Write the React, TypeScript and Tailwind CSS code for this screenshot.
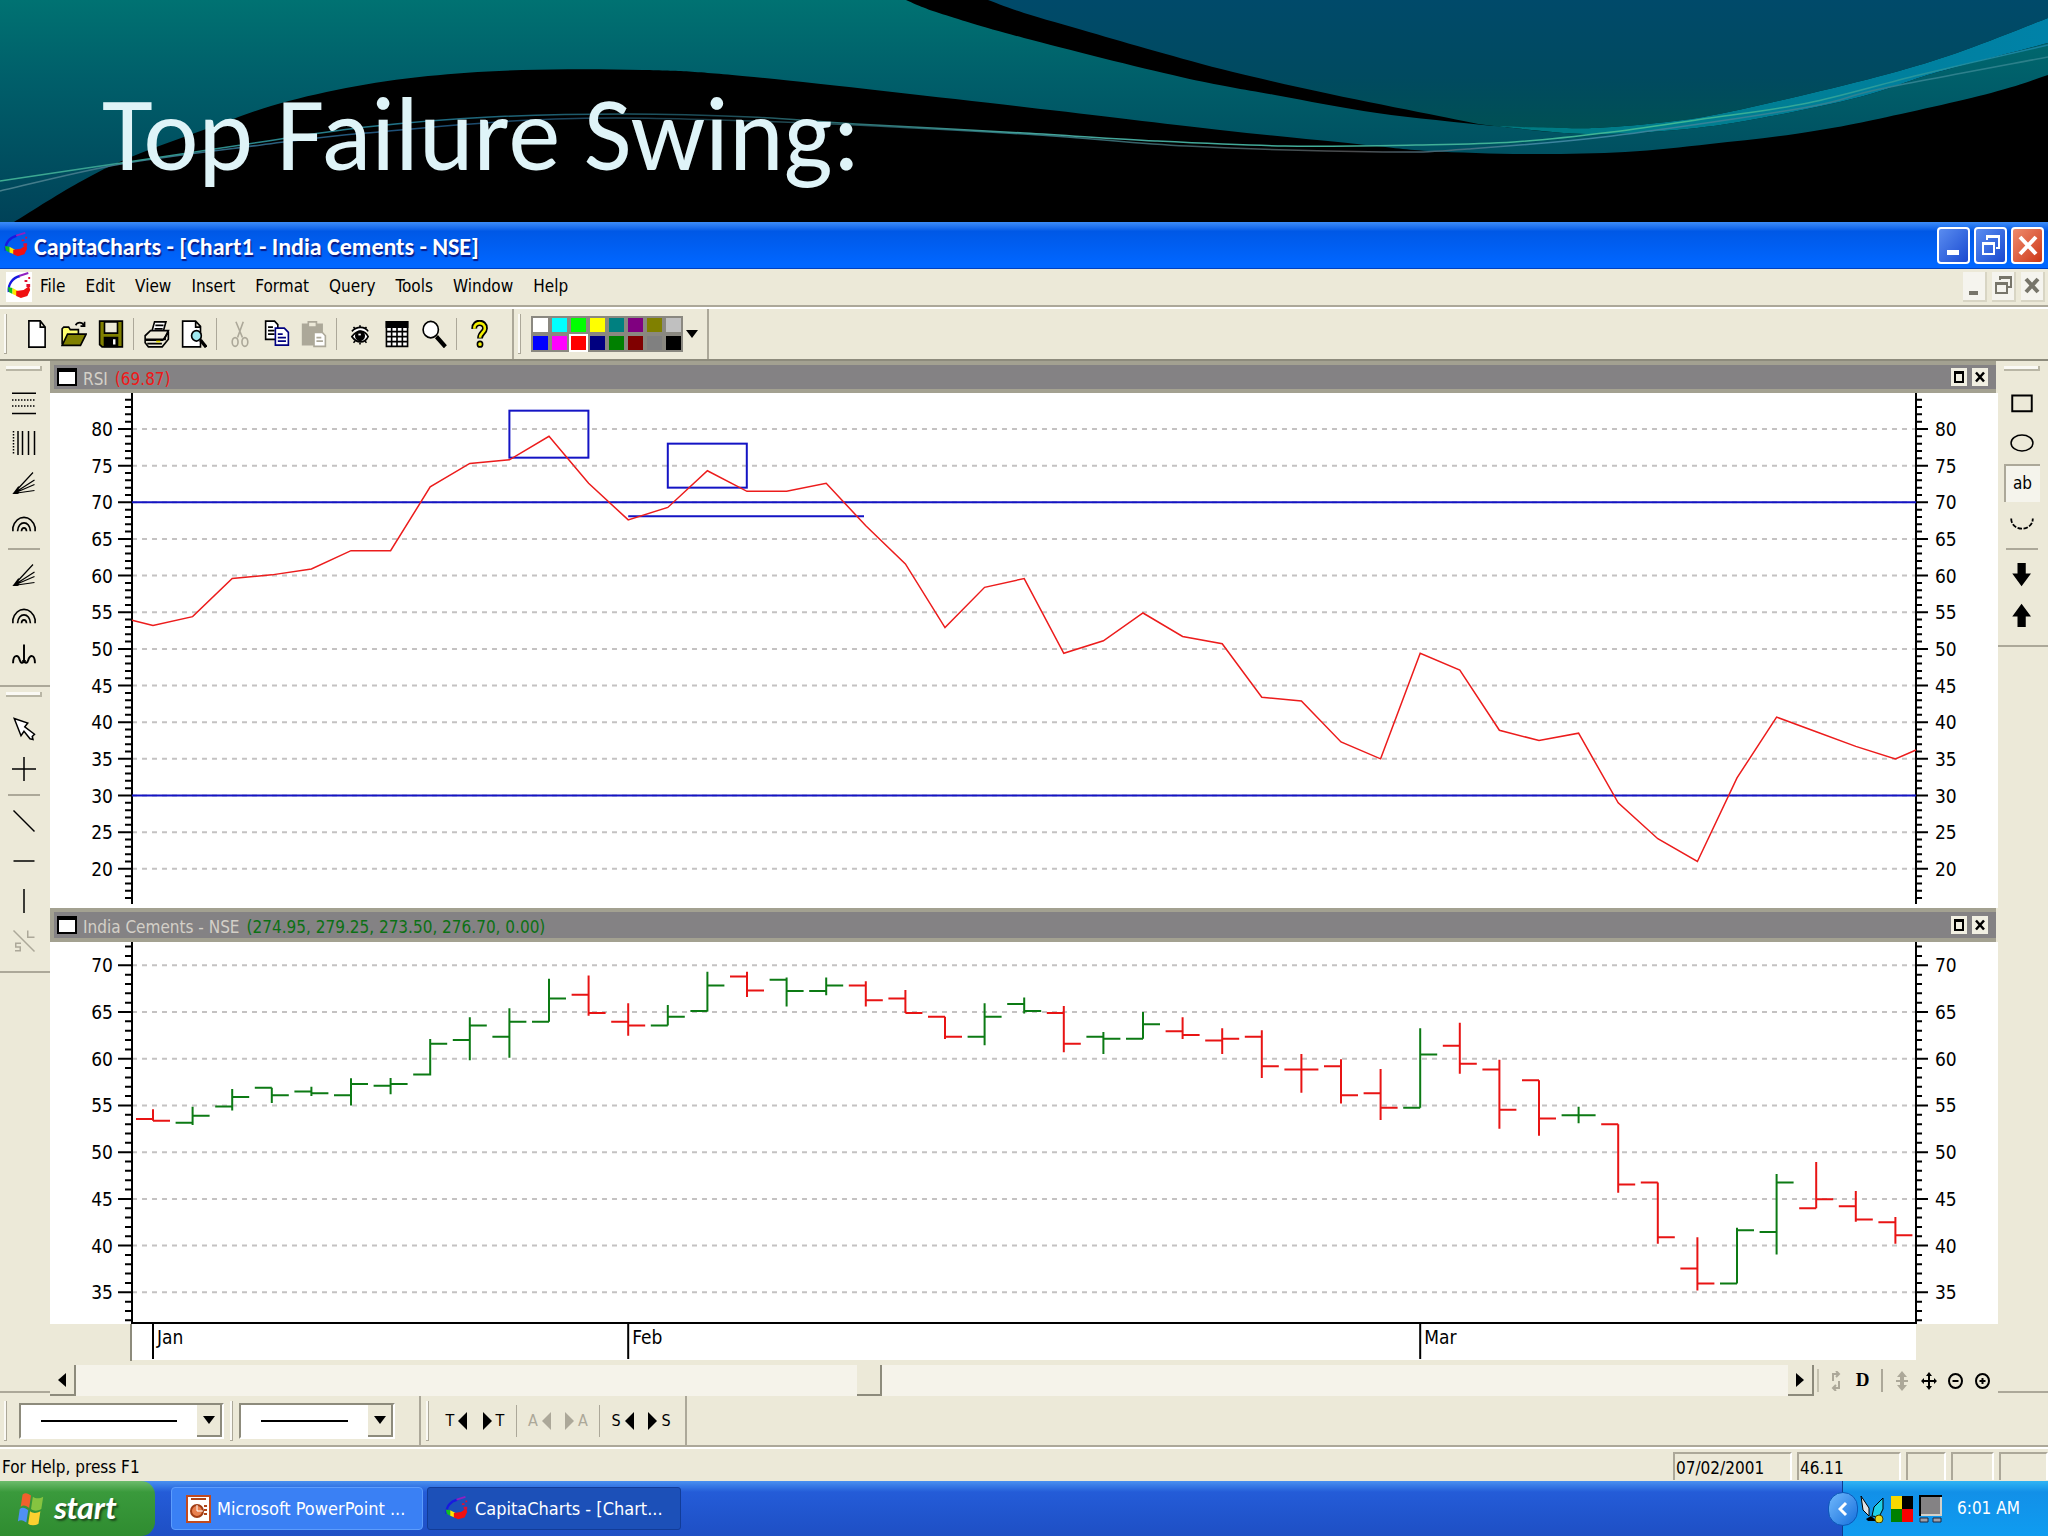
import type { ReactNode } from "react";

type Point = [number, number];

// smooth curve through a list of points
function curve(points: Point[], first = "M") {
  let d = `${first}${points[0][0]} ${points[0][1]}`;
  for (let i = 0; i < points.length - 1; i++) {
    const p0 = points[Math.max(i - 1, 0)];
    const p1 = points[i];
    const p2 = points[i + 1];
    const p3 = points[Math.min(i + 2, points.length - 1)];
    d += `C${p1[0] + (p2[0] - p0[0]) / 6} ${p1[1] + (p2[1] - p0[1]) / 6} ${p2[0] - (p3[0] - p1[0]) / 6} ${p2[1] - (p3[1] - p1[1]) / 6} ${p2[0]} ${p2[1]}`;
  }
  return d;
}

const tealTop: Point[] = [[906, 0], [939, 13], [1024, 38], [1181, 77], [1275, 95], [1377, 113], [1494, 126], [1586, 134], [1677, 130], [1756, 119], [1860, 97], [1938, 72], [2048, 43]];
const tealBottom: Point[] = [[2048, 75], [1991, 93], [1873, 120], [1795, 134], [1710, 144], [1625, 152], [1527, 154], [1429, 151], [1357, 144], [1220, 130], [1024, 107], [754, 77], [643, 70], [522, 70], [428, 76], [346, 88], [271, 106], [209, 128], [131, 157], [78, 183], [14, 222]];
const blueBottom: Point[] = [[988, 0], [1024, 13], [1089, 32], [1155, 51], [1233, 72], [1330, 94], [1429, 114], [1494, 126], [1560, 128], [1612, 127], [1703, 117], [1808, 94], [1899, 71], [1965, 50], [2048, 18]];
const cyanTop: Point[] = [[1494, 126], [1560, 128], [1612, 127], [1703, 117], [1808, 94], [1899, 71], [1965, 50], [2048, 18]];
const cyanBottom: Point[] = [[2048, 43], [1938, 72], [1860, 97], [1756, 119], [1677, 130], [1586, 134], [1494, 126]];
const greenLine: Point[] = [[0, 181], [121, 163], [261, 142], [366, 127], [490, 117], [627, 114], [751, 117], [856, 124], [1024, 133], [1155, 141], [1285, 146], [1416, 145], [1514, 142], [1612, 132], [1710, 118], [1808, 103], [1919, 75], [2048, 45]];
const greyLine: Point[] = [[0, 191], [121, 164], [261, 145], [366, 133], [555, 119], [751, 121], [1024, 134], [1187, 146], [1383, 152], [1468, 149], [1612, 136], [1808, 107], [1880, 89], [2048, 57]];

function Banner() {
  return (
    <header className="grid bg-black">
      <svg className="col-start-1 row-start-1 h-[222px] w-full" viewBox="0 0 2048 222" preserveAspectRatio="none">
        <defs>
          <linearGradient id="teal" x1="0" y1="0" x2="0" y2="1">
            <stop offset="0" stopColor="#007272" />
            <stop offset="0.35" stopColor="#005f6a" />
            <stop offset="1" stopColor="#004258" />
          </linearGradient>
          <linearGradient id="blue" x1="0" y1="0" x2="0" y2="1">
            <stop offset="0" stopColor="#004a6a" />
            <stop offset="0.6" stopColor="#004a60" />
            <stop offset="1" stopColor="#005054" />
          </linearGradient>
          <linearGradient id="cyan" x1="0" y1="0" x2="1" y2="0">
            <stop offset="0" stopColor="#007a80" />
            <stop offset="1" stopColor="#0082a8" />
          </linearGradient>
          <linearGradient id="line" x1="0" y1="0" x2="1" y2="0">
            <stop offset="0" stopColor="#3fae92" />
            <stop offset="0.2" stopColor="#1f6f86" />
            <stop offset="0.35" stopColor="#1c4a55" />
            <stop offset="0.5" stopColor="#44a39c" />
            <stop offset="0.82" stopColor="#3fb894" />
            <stop offset="1" stopColor="#1880a0" />
          </linearGradient>
          <linearGradient id="line2" x1="0" y1="0" x2="1" y2="0">
            <stop offset="0" stopColor="#47808c" />
            <stop offset="0.2" stopColor="#1d4f78" />
            <stop offset="0.35" stopColor="#1c3d46" />
            <stop offset="0.5" stopColor="#2d6f78" />
            <stop offset="0.66" stopColor="#4a4a4c" />
            <stop offset="0.75" stopColor="#3d84a0" />
            <stop offset="1" stopColor="#2a7f88" />
          </linearGradient>
        </defs>
        <path fill="url(#teal)" d={`M0 222V0H906${curve(tealTop, "L")}${curve(tealBottom, "L")}Z`} />
        <path fill="url(#blue)" d={`${curve(blueBottom)}V0Z`} />
        <path fill="url(#cyan)" d={`${curve(cyanTop)}${curve(cyanBottom, "L")}Z`} />
        <path fill="none" stroke="url(#line2)" strokeWidth="1.5" d={curve(greyLine)} />
        <path fill="none" stroke="url(#line)" strokeWidth="1.5" d={curve(greenLine)} />
      </svg>
      <h1 className="col-start-1 row-start-1 self-center pt-[48px] pl-[102px] text-[104px] leading-[110px] text-[#dff4f8] font-[Carlito,Lato,sans-serif]">
        Top Failure Swing:
      </h1>
    </header>
  );
}

function AppLogo({ className }: { className: string }) {
  return (
    <svg className={className} viewBox="0 0 28 28" preserveAspectRatio="none">
      <path d="M3 20C2 12 7 6 15 4" fill="none" stroke="#1818e0" strokeWidth="2.5" />
      <path d="M14 4L24 1" stroke="#9020c0" strokeWidth="2" />
      <path d="M2 15l5 1v6l-4-2z" fill="#10c020" />
      <path d="M7 16l6 3-1 5-5-2z" fill="#ffe800" />
      <path d="M11 19l8-1 6-4 1 4-3 6-7 2-5-2z" fill="#f01010" />
      <path d="M20 8h3v2h-3zM24 5h2v2h-2zM22 12h4v3h-4z" fill="#e01030" />
    </svg>
  );
}

const captionButton = "flex h-[37px] w-[33px] items-center justify-center rounded-[4px] border-2 border-white";

function TitleBar() {
  return (
    <div className="flex h-[47px] items-center bg-linear-to-b from-[#3c8cf8] via-[#0058e6] via-20% to-[#0066ff] to-90% pr-1 pl-[3px] border-b border-[#0040c0]">
      <AppLogo className="h-[26px] w-[26px]" />
      <span className="ml-[5px] flex-1 pt-[3px] text-[24px] leading-7 font-bold text-white [text-shadow:1px_2px_1px_#0a1883] font-[Carlito,Lato,sans-serif]">
        CapitaCharts - [Chart1 - India Cements - NSE]
      </span>
      <div className="flex gap-1">
        <button aria-label="Minimize" className={`${captionButton} bg-linear-to-br from-[#5a8cf0] to-[#1c48d0]`}>
          <svg className="h-7 w-6" viewBox="0 0 24 28"><path d="M5 19h12v5H5z" fill="#fff" /></svg>
        </button>
        <button aria-label="Restore" className={`${captionButton} bg-linear-to-br from-[#5a8cf0] to-[#1c48d0]`}>
          <svg className="h-7 w-6" viewBox="0 0 24 28">
            <path d="M8 9V5h12v12h-3M4 12h11v11H4zM4 13h11M8 6h12" fill="none" stroke="#fff" strokeWidth="2" />
          </svg>
        </button>
        <button aria-label="Close" className={`${captionButton} bg-linear-to-br from-[#ee8a6c] to-[#cc3410]`}>
          <svg className="h-7 w-6" viewBox="0 0 24 28">
            <path d="M4 6l16 17M20 6L4 23" stroke="#fff" strokeWidth="4" />
          </svg>
        </button>
      </div>
    </div>
  );
}

const menus = ["File", "Edit", "View", "Insert", "Format", "Query", "Tools", "Window", "Help"];
const mdiButton = "flex h-[30px] w-6 items-center justify-center border-r-2 border-b-2 border-[#d8d5c4] bg-[#f5f4ee]";

function MenuBar() {
  return (
    <nav className="flex h-[38px] items-center border-b-2 border-[#aca899] pr-[3px] pl-[6px]">
      <div className="mr-2 h-[30px] w-[26px] bg-white">
        <AppLogo className="h-[28px] w-[26px]" />
      </div>
      <div className="flex flex-1 gap-5">
        {menus.map((name) => (
          <button key={name}>{name}</button>
        ))}
      </div>
      <div className="flex gap-[5px]">
        <button aria-label="Minimize chart" className={mdiButton}>
          <svg className="h-6 w-5" viewBox="0 0 20 24"><path d="M5 17h9v4H5z" fill="#77756a" /></svg>
        </button>
        <button aria-label="Restore chart" className={mdiButton}>
          <svg className="h-6 w-5" viewBox="0 0 20 24">
            <path d="M7 6V3h11v10h-3M3 9h11v10H3zM3 10h11M7 4h11" fill="none" stroke="#77756a" strokeWidth="2" />
          </svg>
        </button>
        <button aria-label="Close chart" className={mdiButton}>
          <svg className="h-6 w-5" viewBox="0 0 20 24">
            <path d="M4 5l12 13M16 5L4 18" stroke="#77756a" strokeWidth="4" />
          </svg>
        </button>
      </div>
    </nav>
  );
}

function Pixel({ children, className = "h-[28px] w-[26px]" }: { children: ReactNode; className?: string }) {
  return (
    <svg className={className} viewBox="0 0 16 16" preserveAspectRatio="none" fill="none" stroke="#000">
      {children}
    </svg>
  );
}

const toolIcons: Record<string, ReactNode> = {
  New: <path d="M3 .5h7l3 3.500v11.500H3zM10 .5V4h3" fill="#fff" />,
  Open: (
    <>
      <path d="M.7 14V5l1-1h3l1 1.500h5V8" fill="#ffff70" />
      <path d="M.7 14.500L4 8h11.500l-3.500 6.500z" fill="#808000" />
      <path d="M9 3c1-2 4-2 5 0M14.500 1v2.500H12" />
    </>
  ),
  Save: (
    <>
      <path d="M1 .7h14v14.600H2.500L1 14z" fill="#808000" />
      <path d="M4 1h8v6.500H4z" fill="#ece9d8" />
      <path d="M4 10h8v5H4z" fill="#000" />
      <path d="M10 11v3" stroke="#fff" strokeWidth="1.500" />
    </>
  ),
  Print: (
    <>
      <path d="M5 6l1.500-5h7L12 6" fill="#fff" />
      <path d="M7 3h5M6.500 5h5" />
      <path d="M.7 9L4 6h11l-2 4v1H.7zM.7 9v4l2 2.300h8.500L15 11V6.500" fill="#ece9d8" />
      <path d="M1 11.500h11M2 13.500h9M12 11l3-4" />
      <path d="M7.500 12.300h2.500" stroke="#e8e000" />
    </>
  ),
  Preview: (
    <>
      <path d="M1 .6h8l3 3v11.700H1zM9 .6V4h3" fill="#fff" />
      <circle cx="9.500" cy="9" r="3" fill="#9fe8f0" />
      <path d="M12 11.500l3.500 4" strokeWidth="2" />
    </>
  ),
  Cut: (
    <g stroke="#aca899">
      <path d="M5.500 1l4 9M10 1L6.500 10" />
      <ellipse cx="5" cy="12.500" rx="1.800" ry="2.500" />
      <ellipse cx="11" cy="12.500" rx="1.800" ry="2.500" />
    </g>
  ),
  Copy: (
    <>
      <path d="M1 .6h5.500l2 2V11H1zM2.500 4h3M2.500 6h4M2.500 8h4" fill="#fff" />
      <path d="M7 4.600h5.500l2.500 2.500v7.300H7zM8.500 8h3M8.500 10h5M8.500 12h5" fill="#fff" stroke="#000080" />
    </>
  ),
  Paste: (
    <>
      <path d="M1 2.500h12V14H1z" fill="#aca899" stroke="#aca899" />
      <path d="M4.500 1h5v3h-5z" fill="#ece9d8" stroke="#aca899" />
      <path d="M8 7h5l2 2v6H8zM9.500 10h3M9.500 12h4" fill="#fff" stroke="#aca899" />
    </>
  ),
  Watch: (
    <>
      <path d="M3 6.500c3-3 8-3 10 0M3 9.500c3-4 8-4 10 0-2 4-7 4-10 0z" fill="#fff" />
      <circle cx="8" cy="9" r="2.600" fill="#000" />
      <path d="M7 8.300h1.500" stroke="#fff" />
      <path d="M4 13l1-1M8 14v-1M12 13l-1-1M4 4l1 1M8 3v1M12 4l-1 1" />
    </>
  ),
  Grid: (
    <>
      <path d="M1.500 1h13v14h-13z" fill="#fff" />
      <path d="M1.500 1h13v3h-13z" fill="#000" />
      <path d="M4.700 4v11M8 4v11M11.300 4v11M1.500 6.700h13M1.500 9.500h13M1.500 12.300h13" />
    </>
  ),
  Zoom: (
    <>
      <circle cx="6" cy="5.500" r="4.700" fill="#fff" />
      <path d="M9.500 9.500l5.500 5.800" strokeWidth="2.500" />
    </>
  ),
  Help: (
    <>
      <path d="M4.500 5c-.5-4.500 7-4.500 6.500 0 0 2-3 2.500-3 5.500" strokeWidth="3.600" />
      <path d="M4.500 5c-.3-4.300 6.800-4.300 6.500 0 0 2-3 2.500-3 5.200" stroke="#f4f000" strokeWidth="1.600" />
      <circle cx="8" cy="13.800" r="1.600" fill="#f4f000" />
    </>
  ),
};

const toolGroups = [["New", "Open", "Save"], ["Print", "Preview"], ["Cut", "Copy", "Paste"], ["Watch", "Grid", "Zoom"], ["Help"]];

const palette = [
  "bg-white", "bg-[#00ffff]", "bg-[#00ff00]", "bg-[#ffff00]", "bg-[#008080]", "bg-[#800080]", "bg-[#808000]", "bg-[#c0c0c0]",
  "bg-[#0000ff]", "bg-[#ff00ff]", "bg-[#ff0000]", "bg-[#000080]", "bg-[#008000]", "bg-[#800000]", "bg-[#808080]", "bg-black",
];

function VGrip() {
  return <span className="h-10 w-[3px] border-r border-b border-[#aca899] bg-[#faf9f4]" />;
}

function VRule() {
  return <span className="mx-1 h-8 w-px bg-[#aca899]" />;
}

function Toolbar() {
  return (
    <div className="flex h-[54px] items-stretch border-t-2 border-t-white border-b-2 border-b-[#8d8b7c]">
      <div className="flex items-center border-r-2 border-[#aca899] pr-[14px] pl-1">
        <VGrip />
        <div className="ml-[11px] flex items-center">
          {toolGroups.map((group, i) => (
            <div key={group[0]} className="flex items-center">
              {i > 0 && <VRule />}
              {group.map((name) => (
                <button key={name} aria-label={name} className="flex h-10 w-[37px] items-center justify-center">
                  <Pixel>{toolIcons[name]}</Pixel>
                </button>
              ))}
            </div>
          ))}
        </div>
      </div>
      <div className="flex items-center border-r-2 border-[#aca899] pr-[9px] pl-1">
        <VGrip />
        <div className="ml-[10px] grid grid-cols-8">
          {palette.map((color, i) => (
            <button
              key={color}
              aria-label={`Color ${i + 1}`}
              className={`h-[18px] w-[19px] border-2 ${i === 10 ? "border-white" : "border-[#8a8880]"} ${color}`}
            />
          ))}
        </div>
        <button aria-label="More colors" className="ml-[3px]">
          <svg className="h-2 w-3" viewBox="0 0 12 8"><path d="M0 0h12L6 8z" /></svg>
        </button>
      </div>
    </div>
  );
}

function HGrip() {
  return (
    <div className="flex h-[22px] items-start justify-center pt-[5px]">
      <span className="h-[5px] w-9 border-r-2 border-b-2 border-[#b9b6a5] bg-[#faf9f4]" />
    </div>
  );
}

function HRule() {
  return (
    <div className="flex h-3 items-center justify-center">
      <span className="h-[2px] w-8 bg-[#aca899]" />
    </div>
  );
}

const fan = <path d="M1 15L14 1M1 15L15 6M1 15L15 9M1 15L15 13M1 15l3-4v4z" strokeWidth=".8" />;
const arcs = <path d="M.6 13.500V11C3 2 13 2 15.400 11v2.500M3.700 13.500C4 6 12 6 12.300 13.500M6.300 13.500c.3-3 3.100-3 3.400 0" strokeWidth="1.100" />;

const leftGroups: { name: string; icon: ReactNode }[][][] = [
  [
    [
      { name: "Horizontal grid", icon: <><path d="M0 1.500h16M0 15h16" /><path d="M0 6h16M0 10h16" strokeDasharray="1 1" /></> },
      { name: "Vertical grid", icon: <><path d="M4 0v16M7 0v16M11 0v16M15 0v16" /><path d="M1 0v16" strokeDasharray="1 1" /></> },
      { name: "Fan", icon: fan },
      { name: "Arcs", icon: arcs },
    ],
    [
      { name: "Speed lines", icon: fan },
      { name: "Speed arcs", icon: arcs },
      { name: "Cycle", icon: <path d="M.7 13.500c0-6 3.500-6 4.500-2 .5 2 2 2 2.800 1 .8 1 2.300 1 2.800-1 1-4 4.500-4 4.500 2M8 1v12M6.800 12h2.400" strokeWidth="1.300" /> },
    ],
  ],
  [
    [
      { name: "Pointer", icon: <path d="M1.500 1l9 3-2 2.500 6.500 5-1.500 1.500.5 2-2-.5-4-5-2 3z" fill="#fff" /> },
      { name: "Crosshair", icon: <path d="M8 0v16M0 8h16" /> },
    ],
    [
      { name: "Trend line", icon: <path d="M1 1l14 14" /> },
      { name: "Horizontal line", icon: <path d="M1 8h14" /> },
      { name: "Vertical line", icon: <path d="M8 0v16" /> },
      { name: "Support line", icon: <g stroke="#aca899"><path d="M1 1l14 14M10.500 1v4.500H15M6 9.500H2.500v2.500h3v2.500H2" /></g> },
    ],
  ],
];

const rightGroups: { name: string; icon: ReactNode }[][][] = [
  [
    [
      { name: "Rectangle", icon: <path d="M1.500 3h13v10.500h-13z" strokeWidth="1.300" /> },
      { name: "Ellipse", icon: <ellipse cx="8" cy="8" rx="7.300" ry="5.300" /> },
      { name: "Text", icon: null },
      { name: "Arc", icon: <path d="M.8 5c0 9 14.400 9 14.400 0" strokeWidth="1.200" strokeDasharray="3 1" /> },
    ],
    [
      { name: "Down arrow", icon: <path d="M5 0h5.500v7h3.500L7.700 15.500 1.500 7H5z" fill="#000" stroke="none" /> },
      { name: "Up arrow", icon: <path d="M5 16h5.500V9h3.500L7.700 .5 1.500 9H5z" fill="#000" stroke="none" /> },
    ],
  ],
];

function SideBar({ groups }: { groups: typeof leftGroups }) {
  return (
    <div className="mb-[3px] w-[50px] shrink-0 border-b-2 border-[#aca899]">
      {groups.map((sections, g) => (
        <div key={g} className="border-b-2 border-[#aca899] pr-[3px] pb-[10px]">
          <HGrip />
          {sections.map((section, s) => (
            <div key={s}>
              {s > 0 && <HRule />}
              {section.map(({ name, icon }) => (
                <button key={name} aria-label={name} className="flex h-10 w-full items-center justify-center">
                  {icon ? (
                    <Pixel className="h-6 w-6">{icon}</Pixel>
                  ) : (
                    <span className="flex h-[38px] w-9 items-center justify-center border-t-2 border-l-2 border-[#aca899] bg-[#f5f4ec]">ab</span>
                  )}
                </button>
              ))}
            </div>
          ))}
        </div>
      ))}
    </div>
  );
}

const rsi = [
  53.2, 54.4, 59.6, 60.1, 60.9, 63.4, 63.4, 72.1, 75.3, 75.8, 79.0, 72.6, 67.6, 69.3, 74.3, 71.5, 71.5, 72.6, 66.8, 61.6, 52.9, 58.4, 59.6,
  49.4, 51.1, 54.9, 51.7, 50.7, 43.4, 42.9, 37.3, 35.0, 49.4, 47.1, 38.9, 37.5, 38.5, 29.0, 24.1, 21.0, 32.4, 40.7, 38.7, 36.7, 35.0,
];

// open, high, low, close, color
const bars: [number, number, number, number, "r" | "g"][] = [
  [53.55, 54.6, 53.35, 53.35, "r"],
  [53.15, 54.85, 52.9, 53.9, "g"],
  [54.9, 56.75, 54.45, 55.9, "g"],
  [56.9, 56.9, 55.25, 56.1, "g"],
  [56.5, 57.0, 56.0, 56.3, "g"],
  [56.1, 57.9, 55.0, 57.3, "g"],
  [57.1, 57.95, 56.2, 57.3, "g"],
  [58.3, 62.1, 58.2, 61.6, "g"],
  [62.0, 64.45, 59.85, 63.55, "g"],
  [62.35, 65.4, 60.1, 63.95, "g"],
  [63.95, 68.55, 63.95, 66.45, "g"],
  [66.85, 68.9, 64.6, 64.9, "r"],
  [63.95, 65.95, 62.45, 63.55, "r"],
  [63.55, 65.75, 63.55, 64.5, "g"],
  [65.1, 69.3, 65.05, 67.85, "g"],
  [68.8, 69.3, 66.6, 67.3, "r"],
  [68.45, 68.7, 65.6, 67.25, "g"],
  [67.25, 68.7, 66.8, 67.85, "g"],
  [67.85, 68.3, 65.6, 66.25, "r"],
  [66.45, 67.35, 64.9, 64.9, "r"],
  [64.5, 64.5, 62.1, 62.35, "r"],
  [62.35, 65.95, 61.45, 64.5, "g"],
  [65.85, 66.55, 64.85, 65.1, "g"],
  [64.9, 65.65, 60.7, 61.6, "r"],
  [62.35, 62.85, 60.5, 62.15, "g"],
  [62.15, 65.0, 62.15, 63.7, "g"],
  [62.95, 64.45, 62.1, 62.55, "r"],
  [61.95, 63.25, 60.5, 62.15, "r"],
  [62.35, 63.05, 57.95, 59.2, "r"],
  [58.85, 60.5, 56.35, 58.85, "r"],
  [59.2, 59.95, 55.2, 56.1, "r"],
  [56.3, 58.9, 53.45, 54.75, "r"],
  [54.75, 63.25, 54.75, 60.45, "g"],
  [61.4, 63.85, 58.4, 59.45, "r"],
  [58.85, 59.9, 52.5, 54.55, "r"],
  [57.7, 57.7, 51.75, 53.6, "r"],
  [53.95, 54.85, 53.1, 53.95, "g"],
  [53.0, 53.0, 45.65, 46.55, "r"],
  [46.75, 46.75, 40.2, 40.9, "r"],
  [37.55, 40.9, 35.2, 35.95, "r"],
  [35.95, 41.9, 35.95, 41.65, "g"],
  [41.45, 47.65, 39.05, 46.75, "g"],
  [44.0, 48.95, 44.0, 44.95, "r"],
  [44.2, 45.85, 42.55, 42.8, "r"],
  [42.5, 43.05, 40.2, 41.1, "r"],
];

const LEFT = 82;
const RIGHT = 1866;
const barX = (i: number) => 103 + i * 39.6;
const rsiY = (v: number) => 36 + (80 - v) * 7.33;
const priceY = (v: number) => 23.3 + (70 - v) * 9.343;

const range = (from: number, to: number, step = 1) =>
  Array.from({ length: Math.floor((to - from) / step) + 1 }, (_, i) => from + i * step);

function Axes({ y, min, max, labels, bottom }: { y: (v: number) => number; min: number; max: number; labels: number[]; bottom: number }) {
  return (
    <g>
      {labels.map((v) => (
        <line key={v} x1={LEFT} x2={RIGHT} y1={y(v)} y2={y(v)} stroke="#c4c2c2" strokeWidth="2" strokeDasharray="5 5" />
      ))}
      {range(min, max).map((v) => {
        const major = v % 5 === 0;
        return (
          <path
            key={v}
            stroke="#000"
            strokeWidth="2"
            d={`M${LEFT - (major ? 14 : 7)} ${y(v)}H${LEFT}M${RIGHT} ${y(v)}h${major ? 12 : 6}`}
          />
        );
      })}
      <path d={`M${LEFT} 0V${bottom}M${RIGHT} 0V${bottom}`} stroke="#000" strokeWidth="2" />
      {labels.map((v) => (
        <g key={v} className="text-[19px]">
          <text x={LEFT - 19} y={y(v) + 7} textAnchor="end">{v}</text>
          <text x={RIGHT + 19} y={y(v) + 7}>{v}</text>
        </g>
      ))}
    </g>
  );
}

function RsiChart() {
  const line = [`${LEFT},${rsiY(53.9)}`, ...rsi.map((v, i) => `${barX(i)},${rsiY(v)}`), `${RIGHT},${rsiY(36.2)}`];
  return (
    <svg className="block h-auto w-full bg-white" viewBox="0 0 1948 515" role="img" aria-label="RSI chart">
      <Axes y={rsiY} min={16} max={84} labels={range(20, 80, 5)} bottom={511} />
      <g fill="none" stroke="#1414c4" strokeWidth="2">
        <path d={`M${LEFT} ${rsiY(70)}H${RIGHT}M${LEFT} ${rsiY(30)}H${RIGHT}`} />
        <path d={`M${barX(12)} ${rsiY(68.1)}H814`} />
        <rect x={barX(9)} y={rsiY(82.5)} width="79" height="47" />
        <rect x={barX(13)} y={rsiY(78)} width="79" height="44" />
      </g>
      <polyline points={line.join(" ")} fill="none" stroke="#ec1c1c" strokeWidth="1.5" />
    </svg>
  );
}

function PriceChart() {
  return (
    <svg className="block h-auto w-full bg-white" viewBox="0 0 1948 382" role="img" aria-label="Price chart">
      <Axes y={priceY} min={32} max={72} labels={range(35, 70, 5)} bottom={382} />
      {bars.map(([open, high, low, close, color], i) => (
        <path
          key={i}
          fill="none"
          stroke={color === "r" ? "#e81414" : "#0c7a14"}
          strokeWidth="2"
          d={`M${barX(i)} ${priceY(high)}V${priceY(low)}M${barX(i) - 17} ${priceY(open)}h17M${barX(i)} ${priceY(close)}h17`}
        />
      ))}
      <path d={`M${LEFT} 381H${RIGHT}`} stroke="#000" strokeWidth="2" />
    </svg>
  );
}

function TimeAxis() {
  const months: [string, number][] = [["Jan", 0], ["Feb", 12], ["Mar", 32]];
  return (
    <svg className="block h-auto w-full" viewBox="0 0 1948 38">
      <rect x={LEFT} width={RIGHT - LEFT} height="36" fill="#fff" />
      <path d={`M${LEFT - 1} 0V37`} stroke="#8d8b7c" strokeWidth="2" />
      {months.map(([name, i]) => (
        <g key={name}>
          <path d={`M${barX(i)} 0V35`} stroke="#000" strokeWidth="2" />
          <text x={barX(i) + 4} y="20" className="text-[19px]">{name}</text>
        </g>
      ))}
    </svg>
  );
}

function PanelHeader({ title, values, valueClass, className }: { title: string; values: string; valueClass: string; className: string }) {
  const button = "flex h-[18px] w-4 items-center justify-center bg-[#f1efe2]";
  return (
    <div className={`mr-[2px] flex items-center gap-[5px] border-y-4 border-l-4 border-[#a3a191] bg-[#848284] pr-2 pl-[3px] text-[17px] leading-5 ${className}`}>
      <svg className="h-[18px] w-5" viewBox="0 0 20 18"><path d="M1 1h18v16H1z" fill="#fff" stroke="#000" strokeWidth="2" /><path d="M0 0h20v4H0z" /></svg>
      <div className="flex flex-1 gap-[7px] pt-1 pl-px">
        <span className="text-[#d4d0c8]">{title}</span>
        <span className={valueClass}>{values}</span>
      </div>
      <button aria-label={`Maximize ${title}`} className={button}>
        <svg className="h-3 w-[10px]" viewBox="0 0 10 12"><path d="M1 1h8v10H1zM1 2h8" fill="none" stroke="#000" strokeWidth="2" /></svg>
      </button>
      <button aria-label={`Close ${title}`} className={button}>
        <svg className="h-3 w-[10px]" viewBox="0 0 10 12"><path d="M1 1.500l8 9M9 1.500l-8 9" stroke="#000" strokeWidth="2.500" /></svg>
      </button>
    </div>
  );
}

function ScrollRow() {
  const arrow = "flex w-[26px] items-center justify-center border-r-2 border-b-2 border-[#8d8b7c] bg-[#ece9d8]";
  const small = "flex w-[27px] items-center justify-center";
  return (
    <div className="flex h-[34px] items-stretch pt-[3px] pr-[2px]">
      <button aria-label="Scroll left" className={arrow}>
        <svg className="h-[14px] w-2" viewBox="0 0 8 14"><path d="M8 0v14L0 7z" /></svg>
      </button>
      <div className="flex flex-1 bg-[#f5f3ea]">
        <span className="w-[45.6%]" />
        <span className="w-[25px] border-r-2 border-b-2 border-[#8d8b7c] bg-[#ece9d8]" />
      </div>
      <button aria-label="Scroll right" className={arrow}>
        <svg className="h-[14px] w-2" viewBox="0 0 8 14"><path d="M0 0v14l8-7z" /></svg>
      </button>
      <span className="mx-[3px] my-1 w-[2px] bg-[#c5c2b0]" />
      <button aria-label="Refresh" className={small}>
        <svg className="h-5 w-3" viewBox="0 0 12 20" fill="none" stroke="#aca899" strokeWidth="2"><path d="M6 0L9 3 6 6M9 3H3v6h-1M6 20l-3-3 3-3M3 17h6v-6h1" /></svg>
      </button>
      <button className={`${small} text-[19px] font-bold font-['Liberation_Serif',serif]`}>D</button>
      <span className="mx-[5px] my-1 w-[2px] bg-[#aca899]" />
      <button aria-label="Fit height" className={small}>
        <svg className="h-5 w-3" viewBox="0 0 12 20" fill="#aca899"><path d="M6 0l5 6H8v3h4v2H8v3h3l-5 6-5-6h3v-3H0V9h4V6H1z" /></svg>
      </button>
      <button aria-label="Move" className={small}>
        <svg className="h-[18px] w-4" viewBox="0 0 16 18"><path d="M8 0l3 4H9v4h4V6l3 3-3 3v-2H9v4h2l-3 4-3-4h2v-4H3v2L0 9l3-3v2h4V4H5z" /></svg>
      </button>
      <button aria-label="Zoom out" className={small}>
        <svg className="h-4 w-[15px]" viewBox="0 0 15 16" fill="none" stroke="#000" strokeWidth="2"><ellipse cx="7.500" cy="8" rx="6.500" ry="7" /><path d="M4.500 8h6" /></svg>
      </button>
      <button aria-label="Zoom in" className={small}>
        <svg className="h-4 w-[15px]" viewBox="0 0 15 16" fill="none" stroke="#000" strokeWidth="2"><ellipse cx="7.500" cy="8" rx="6.500" ry="7" /><path d="M4.500 8h6M7.500 5v6" /></svg>
      </button>
    </div>
  );
}

function LineSelect({ label, className }: { label: string; className: string }) {
  return (
    <div className={`grid h-9 border-2 border-[#8d8b7c] border-r-white border-b-white bg-white ${className}`}>
      <select aria-label={label} className="col-start-1 row-start-1 h-full w-full appearance-none">
        <option aria-label="Solid" />
      </select>
      <div className="pointer-events-none col-start-1 row-start-1 flex items-center">
        <span className="mx-5 h-[2px] flex-1 bg-black" />
        <span className="flex h-full w-[25px] items-center justify-center border-r-2 border-b-2 border-[#8d8b7c] bg-[#ece9d8]">
          <svg className="h-2 w-3" viewBox="0 0 12 8"><path d="M0 0h12L6 8z" /></svg>
        </span>
      </div>
    </div>
  );
}

function Stepper({ letter, disabled }: { letter: string; disabled?: boolean }) {
  const tone = disabled ? "text-[#aca899]" : "text-black";
  return (
    <div className={`flex text-[16px] ${tone}`}>
      <button disabled={disabled} className="flex h-9 w-[37px] items-center justify-center gap-1">
        {letter}
        <svg className="h-[18px] w-[9px]" viewBox="0 0 9 18" fill="currentColor"><path d="M9 0v18L0 9z" /></svg>
      </button>
      <button disabled={disabled} className="flex h-9 w-[37px] items-center justify-center gap-1">
        <svg className="h-[18px] w-[9px]" viewBox="0 0 9 18" fill="currentColor"><path d="M0 0v18l9-9z" /></svg>
        {letter}
      </button>
    </div>
  );
}

function BottomBar() {
  return (
    <div className="flex h-[51px] items-stretch border-b-2 border-[#aca899]">
      <div className="flex items-center gap-[6px] border-r-2 border-[#aca899] pr-6 pl-1">
        <VGrip />
        <LineSelect label="Line style" className="ml-[6px] w-[205px]" />
        <VGrip />
        <LineSelect label="Line width" className="w-[156px]" />
      </div>
      <div className="flex items-center border-r-2 border-[#aca899] pr-[7px] pl-[5px]">
        <VGrip />
        <span className="w-[9px]" />
        <Stepper letter="T" />
        <VRule />
        <Stepper letter="A" disabled />
        <VRule />
        <Stepper letter="S" />
      </div>
    </div>
  );
}

function StatusBar() {
  const cell = "h-7 border-t-2 border-l-2 border-[#aca899] border-r-2 border-r-white pl-px leading-[28px]";
  return (
    <footer className="flex h-[34px] items-end gap-[5px] border-t-2 border-white pb-px pl-[2px]">
      <span className="h-7 flex-1 leading-[30px]">For Help, press F1</span>
      <span className={`${cell} w-[119px]`}>07/02/2001</span>
      <span className={`${cell} w-[104px]`}>46.11</span>
      <span className={`${cell} w-10`} />
      <span className={`${cell} w-[43px]`} />
      <span className={`${cell} w-[49px]`} />
    </footer>
  );
}

function TaskBar() {
  return (
    <div className="flex h-[55px] items-stretch bg-linear-to-b from-[#4a90f0] via-[#245cd8] via-20% to-[#1e4fc4] text-[18px] text-white">
      <button className="mr-4 flex w-[155px] items-center gap-2 rounded-r-[14px] bg-linear-to-b from-[#6cbc6c] via-[#3a9a3c] via-20% to-[#2f8c30] pl-4 text-[32px] leading-9 font-bold italic [text-shadow:2px_2px_2px_#1c4c1c] font-[Carlito,Lato,sans-serif]">
        <svg className="h-9 w-[30px]" viewBox="0 0 32 32" preserveAspectRatio="none">
          <path d="M7 3c3-2 6-1 9 1l-2 11c-3-2-6-3-9-1z" fill="#f0602c" />
          <path d="M18 5c3 2 7 2 11 0l-2 11c-4 2-8 2-11 0z" fill="#86c440" />
          <path d="M4 16c3-2 6-1 9 1l-2 11c-3-2-6-3-9-1z" fill="#5090f4" />
          <path d="M15 18c3 2 7 2 11 0l-2 11c-4 2-8 2-11 0z" fill="#fcd030" />
        </svg>
        start
      </button>
      <button className="my-[6px] mr-1 flex w-[252px] items-center gap-[6px] rounded-[4px] border border-[#5c9cfc] bg-[#3a80f4] pl-[14px] whitespace-nowrap">
        <svg className="h-7 w-[25px]" viewBox="0 0 25 28">
          <path d="M1 1h23v26H1z" fill="#fff" stroke="#c04a20" strokeWidth="2" />
          <path d="M5 4h15M18 11h3M18 15h3M18 19h3" stroke="#b04418" strokeWidth="2" />
          <circle cx="11" cy="16" r="6" fill="#e88050" stroke="#a03c14" strokeWidth="2" />
          <path d="M11 10v6h6" stroke="#fff" fill="none" />
        </svg>
        Microsoft PowerPoint ...
      </button>
      <button className="my-[6px] flex w-[254px] items-center gap-[6px] rounded-[3px] border border-[#123c98] bg-[#1c50b8] pl-4 whitespace-nowrap">
        <AppLogo className="h-[25px] w-[25px]" />
        CapitaCharts - [Chart...
      </button>
      <div className="ml-auto flex w-[206px] items-center gap-[6px] border-l border-[#0c3c90] bg-linear-to-b from-[#30b4f4] via-[#1290e8] via-20% to-[#0f9cf0] text-[17px]">
        <button aria-label="Show hidden icons" className="-ml-[15px] flex h-[34px] w-[30px] items-center justify-center rounded-full border border-[#0c58b8] bg-linear-to-br from-[#70b8fc] to-[#0c70dc]">
          <svg className="h-4 w-[10px]" viewBox="0 0 10 16"><path d="M8 2L2 8l6 6" fill="none" stroke="#fff" strokeWidth="3" /></svg>
        </button>
        <svg className="-ml-1 h-7 w-[25px]" viewBox="0 0 25 28">
          <path d="M1 1l8 12v8l-6-6z" fill="#e0e4e8" stroke="#000" />
          <path d="M23 3l-9 9-2 9 7 1 4-8z" fill="#20d0e8" stroke="#000" />
          <path d="M6 24l5-3 6 5H8z" />
          <circle cx="19" cy="24" r="4" fill="#e8d820" stroke="#404000" />
        </svg>
        <svg className="h-[26px] w-[22px]" viewBox="0 0 22 26">
          <path d="M0 0h11v13H0z" fill="#f8d800" /><path d="M11 0h11v13H11z" /><path d="M0 13h11v13H0z" fill="#008000" /><path d="M11 13h11v13H11z" fill="#f80000" />
        </svg>
        <svg className="h-7 w-[23px]" viewBox="0 0 23 28">
          <path d="M1 1h21v19H1z" fill="#848284" stroke="#000" strokeWidth="2" /><path d="M22 2v18H2" fill="none" stroke="#d4d0c8" strokeWidth="2" />
          <path d="M1 23h8v4H1zM14 23h8v4h-8z" fill="#a0a0a8" stroke="#202840" />
        </svg>
        <span className="ml-[9px]">6:01 AM</span>
      </div>
    </div>
  );
}

export default function App() {
  return (
    <div className="flex min-h-screen flex-col bg-[#ece9d8] text-[17px] text-black font-['DejaVu_Sans_Condensed','DejaVu_Sans',sans-serif]">
      <Banner />
      <TitleBar />
      <MenuBar />
      <Toolbar />
      <main className="flex flex-1">
        <SideBar groups={leftGroups} />
        <div className="min-w-0 flex-1">
          <PanelHeader title="RSI" values="(69.87)" valueClass="text-[#f01818]" className="h-8" />
          <RsiChart />
          <PanelHeader
            title="India Cements - NSE"
            values="(274.95, 279.25, 273.50, 276.70, 0.00)"
            valueClass="text-[#0c7014]"
            className="h-[34px]"
          />
          <PriceChart />
          <TimeAxis />
          <ScrollRow />
        </div>
        <SideBar groups={rightGroups} />
      </main>
      <BottomBar />
      <StatusBar />
      <TaskBar />
    </div>
  );
}
